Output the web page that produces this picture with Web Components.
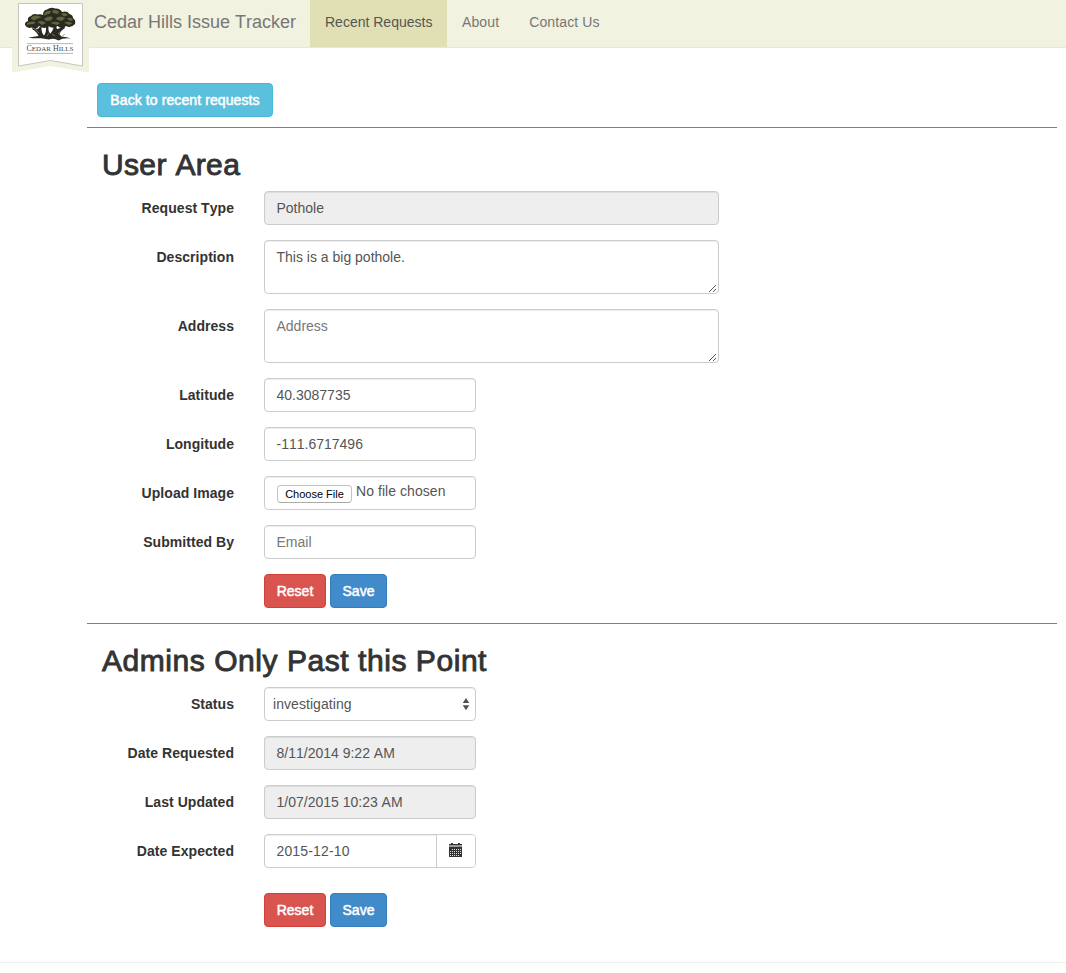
<!DOCTYPE html>
<html lang="en">
<head>
<meta charset="utf-8">
<title>Cedar Hills Issue Tracker</title>
<style>
html,body{margin:0;background:#fff}
body{font:14px/20px "Liberation Sans",Arial,sans-serif;font-kerning:none;color:#333}
</style>
</head>
<body>
<tracker-app></tracker-app>
<script>
const define = (name, html, setup) => {
  const t = document.createElement('template');
  t.innerHTML = html;
  customElements.define(name, class extends HTMLElement {
    connectedCallback() {
      if (this.shadowRoot) return;
      this.attachShadow({mode: 'open'}).append(t.content.cloneNode(true));
      if (setup) setup(this, this.shadowRoot);
    }
  });
};

define('cedar-logo', `
<style>:host{display:block;width:77px;height:73px}svg{display:block}text{font-family:"Liberation Serif",serif}</style>
<svg width="77" height="73" viewBox="12 0 77 73">
  <path d="M12 0H89V72.500L50.500 66L12 72.500Z" fill="#f1f2e0"/>
  <path d="M18.500 3.500H82.500V66L50.500 60.500L18.500 66Z" fill="#fff" stroke="#c9c5bd"/>
  <g fill="#2b2a20">
    <path d="M28 37.800Q34 36.500 38.500 36Q37 32 32 29L33 27.500Q38 31 39.500 27L41.500 27Q41 32 44 35.500Q46.500 32 46 27L48.500 27Q48 32 50.500 33.500Q53 31 54 26L56.500 26Q56 30 59 28.500L64 26L65 28Q60.500 31 59.500 34.500L61.500 36.500Q67 37 71 38.500Q63 37.500 58.500 40.500Q54 37.500 49 39.500L41 38.300Q34 38.500 28 37.800Z"/>
    <path d="M25 25Q24.500 22 28 21Q27 17 31 16Q33 13 38 14.500Q41 14 43 15Q43 10 47 9.500Q51 6.500 55 8.500Q60 8 62 12Q67 10.500 69.500 14Q73 15 73 18Q76 20 75 24Q71 28.500 66 26Q62 30 57.500 26Q53 29 49 26.500Q44 29.500 39 26Q36 31 32 27.500Q27 29 25 25Z"/>
  </g>
  <g fill="#64653f">
    <path d="M27 23Q31 20.500 35.500 22L34 24Q30 24 27 25ZM30.500 18.500Q33 14.500 38 16L42 17Q37 18.500 34 20.500ZM44.500 13Q47 10 51 11L50 13.500Q46 14 44.500 16ZM52 10.500Q56 9 59 11.500L58 14L53 13ZM61 14Q65 11.500 68 15L64 16.500ZM44 19Q49 15 53 17.500L51 20.500L46 21ZM56 18Q61 15 65 18L62 21L57 20ZM67 18.500Q71 16.500 73.500 20L70 21ZM37.500 22Q42 19.500 46 23L42 25ZM50.500 23Q55 20.500 60 23L57 25ZM64 22.500Q69 20.500 72.500 23.500L69 25Z"/>
  </g>
  <path d="M36 30L39 33M62 30L58 34M49 33L47 36M33 28L36 30M65 34L61 37M52 34L55 36" stroke="#8b897f" stroke-width=".7"/>
  <path d="M27 43.600H73M27 53.400H73" stroke="#85857e" stroke-width=".6"/>
  <text x="26.500" y="51.300" textLength="47" lengthAdjust="spacingAndGlyphs" font-size="8" fill="#4a4a44">C<tspan font-size="7">EDAR</tspan> H<tspan font-size="7">ILLS</tspan></text>
</svg>`);

define('nav-link', `
<style>
:host{display:block;padding:12px 15px 15px;height:20px;color:#777;letter-spacing:.12px;white-space:nowrap}
:host([active]){box-sizing:border-box;width:137px;height:47px;background:#e1e0b5;color:#555;letter-spacing:0}
</style><slot></slot>`);

define('nav-bar', `
<style>
:host{display:flex;height:47px;background:#f1f2e0;border-bottom:1px solid #e7e7e0;padding-left:12px}
cedar-logo{flex:none}
.brand{box-sizing:border-box;width:221px;padding:12px 0 0 5px;font-size:18px;color:#777;white-space:nowrap}
</style>
<cedar-logo></cedar-logo><div class="brand">Cedar Hills Issue Tracker</div><slot></slot>`);

define('ui-button', `
<style>
:host{display:inline-flex;box-sizing:border-box;height:34px;padding:6px 0;justify-content:center;border:1px solid #357ebd;border-radius:4px;background:#428bca;color:#fff;-webkit-text-stroke:.5px #fff;width:57px;white-space:nowrap}
:host([kind=danger]){background:#d9534f;border-color:#d43f3a;width:62px}
:host([kind=info]){background:#5bc0de;border-color:#46b8da;width:176px;letter-spacing:.1px}
</style><slot></slot>`);

define('button-pair', `
<style>:host{display:flex;gap:4px;padding-left:162px}</style>
<ui-button kind="danger">Reset</ui-button><ui-button>Save</ui-button>`);

define('form-row', `
<style>
:host{display:grid;grid-template-columns:132px auto;column-gap:30px;margin-bottom:15px;justify-content:start}
.label{font-weight:bold;text-align:right;padding-top:7px;white-space:nowrap;letter-spacing:.05px}
</style><div class="label"></div><slot></slot>`, (el, r) => {
  r.querySelector('.label').textContent = el.getAttribute('label');
});

define('text-box', `
<style>
:host{display:block;position:relative;box-sizing:border-box;width:212px;height:34px;padding:6px 11.500px;border:1px solid #ccc;border-radius:4px;background:#fff;color:#555;box-shadow:inset 0 1px 1px rgba(0,0,0,.075)}
:host([wide]){width:455px}
:host([area]){height:54px}
:host([disabled]){background:#eee}
:host([empty]){color:#777}
svg{display:none;position:absolute;right:1px;bottom:1px}
:host([area]) svg{display:block}
</style><slot></slot>
<svg width="8" height="8" viewBox="0 0 8 8" shape-rendering="crispEdges"><path d="M0 7h1v1h-1zM1 6h1v1h-1zM2 5h1v1h-1zM3 4h1v1h-1zM4 3h1v1h-1zM5 2h1v1h-1zM6 1h1v1h-1zM4 7h1v1h-1zM5 6h1v1h-1zM6 5h1v1h-1z" fill="#555"/></svg>`);

define('file-box', `
<style>
:host{display:flex;box-sizing:border-box;width:212px;height:34px;padding:0 12px;border:1px solid #ccc;border-radius:4px;color:#555;box-shadow:inset 0 1px 1px rgba(0,0,0,.075);gap:4px}
.b{box-sizing:border-box;width:75px;height:18px;margin-top:8px;border:1px solid #c4c4c4;border-bottom-color:#aaa;border-radius:4px;font-size:11px;line-height:17px;text-align:center;color:#000;white-space:nowrap}
.t{padding-top:4px;letter-spacing:.06px}
</style><div class="b">Choose File</div><div class="t">No file chosen</div>`);

define('select-box', `
<style>
:host{display:flex;justify-content:space-between;box-sizing:border-box;width:212px;height:34px;padding:6px 5px 6px 8px;border:1px solid #ccc;border-radius:4px;color:#555;box-shadow:inset 0 1px 1px rgba(0,0,0,.075);letter-spacing:.06px}
svg{margin-top:4px}
</style><span><slot></slot></span>
<svg width="8" height="13" viewBox="0 0 8 13"><path d="M.8 5L4 0L7.200 5ZM.8 7.200H7.200L4 12.200Z" fill="#505050"/></svg>`);

define('date-box', `
<style>
:host{display:flex;box-sizing:border-box;width:212px;height:34px;border:1px solid #ccc;border-radius:4px;color:#555;box-shadow:inset 0 1px 1px rgba(0,0,0,.075)}
.v{width:159.500px;padding:6px 0 0 11.500px;border-right:1px solid #ccc;letter-spacing:.15px}
.i{flex:1;background:#fff;border-radius:0 3px 3px 0}
svg{display:block;margin:8px 0 0 11px}
</style><div class="v"><slot></slot></div>
<div class="i"><svg width="15" height="15" viewBox="0 0 15 15" shape-rendering="crispEdges">
<path d="M3 0H5V1H10V0H12V1H14V2H1V1H3Z" fill="#333"/><path d="M1 2H14V4H1Z" fill="#9a9a9a"/><path d="M1 4H14V14H1Z" fill="#333"/>
<path d="M4 6.500H13M2 8.500H13M2 10.500H13M2 12.500H11" stroke="#ddd" stroke-width="1" stroke-dasharray="1 1" shape-rendering="auto"/></svg></div>`);

define('form-section', `
<style>
:host{display:block;border-top:1px solid #808080;padding:20px 15px 15px}
h2{margin:0 0 10px;font-size:30px;line-height:33px;font-weight:normal;-webkit-text-stroke:.9px #333;white-space:nowrap;letter-spacing:var(--heading-spacing,0)}
</style><h2></h2><slot></slot>`, (el, r) => {
  r.querySelector('h2').textContent = el.getAttribute('heading');
});

define('tracker-app', `
<style>
:host{display:block;height:973px;overflow:hidden}
main{margin:0 9px 0 87px;padding-top:35px}
.back{padding:0 10px 10px;display:flex}
.user{--heading-spacing:.35px}
.admin{--heading-spacing:.55px}
button-pair.last{padding-top:10px}
footer{border-top:1px solid #eee;margin-top:20px}
</style>
<nav-bar><nav-link active>Recent Requests</nav-link><nav-link>About</nav-link><nav-link>Contact Us</nav-link></nav-bar>
<main>
  <div class="back"><ui-button kind="info">Back to recent requests</ui-button></div>
  <form-section class="user" heading="User Area">
    <form-row label="Request Type"><text-box wide disabled>Pothole</text-box></form-row>
    <form-row label="Description"><text-box wide area>This is a big pothole.</text-box></form-row>
    <form-row label="Address"><text-box wide area empty>Address</text-box></form-row>
    <form-row label="Latitude"><text-box>40.3087735</text-box></form-row>
    <form-row label="Longitude"><text-box>-111.6717496</text-box></form-row>
    <form-row label="Upload Image"><file-box></file-box></form-row>
    <form-row label="Submitted By"><text-box empty>Email</text-box></form-row>
    <button-pair></button-pair>
  </form-section>
  <form-section class="admin" heading="Admins Only Past this Point">
    <form-row label="Status"><select-box>investigating</select-box></form-row>
    <form-row label="Date Requested"><text-box disabled>8/11/2014 9:22 AM</text-box></form-row>
    <form-row label="Last Updated"><text-box disabled>1/07/2015 10:23 AM</text-box></form-row>
    <form-row label="Date Expected"><date-box>2015-12-10</date-box></form-row>
    <button-pair class="last"></button-pair>
  </form-section>
</main>
<footer></footer>`);
</script>
</body>
</html>
